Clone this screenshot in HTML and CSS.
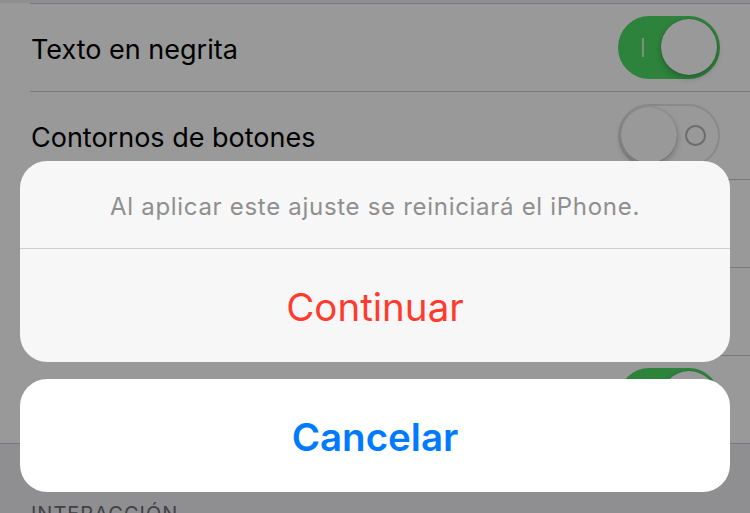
FILE: index.html
```html
<!DOCTYPE html>
<html lang="es">
<head>
  <meta charset="UTF-8">
  <meta name="viewport" content="width=device-width, initial-scale=1.0">
  <title>Accesibilidad</title>
  <link rel="stylesheet" href="styles.css">
</head>
<body>
  <div class="screen">
    <div class="settings">
      <div class="group">
        <div class="row">
          <span class="label">Texto en negrita</span>
          <span class="switch on"><span class="mark-on"></span><span class="knob"></span></span>
        </div>
        <div class="row">
          <span class="label">Contornos de botones</span>
          <span class="switch"><span class="knob"></span><span class="mark-off"></span></span>
        </div>
        <div class="row">
          <span class="label">Reducir transparencia</span>
          <span class="switch"><span class="knob"></span><span class="mark-off"></span></span>
        </div>
        <div class="row">
          <span class="label">Aumentar contraste</span>
          <span class="switch"><span class="knob"></span><span class="mark-off"></span></span>
        </div>
        <div class="row">
          <span class="label">Reducir movimiento</span>
          <span class="switch on"><span class="mark-on"></span><span class="knob"></span></span>
        </div>
      </div>
      <div class="section-header">INTERACCIÓN</div>
    </div>

    <div class="dim">
      <div class="sheet">
        <div class="sheet-group">
          <div class="sheet-message">Al aplicar este ajuste se reiniciará el iPhone.</div>
          <button class="sheet-button destructive">Continuar</button>
        </div>
        <div class="sheet-group">
          <button class="sheet-button cancel">Cancelar</button>
        </div>
      </div>
    </div>
  </div>
</body>
</html>
```

FILE: styles.css
```css
body {
  margin: 0;
  font-family: Inter, "Noto Sans", sans-serif;
  background-color: #efeff4;
}

.screen {
  position: relative;
  width: 750px;
  height: 513px;
  overflow: hidden;
}

.settings {
  padding-top: 3px;
}

.group {
  background-color: #fff;
  border-bottom: 1px solid #c8c7cc;
}

.row {
  height: 87px;
  margin-left: 30px;
  padding-right: 30px;
  border-top: 1px solid #c8c7cc;
  display: flex;
  align-items: center;
  justify-content: space-between;
}

.label {
  font-size: 27px;
  color: #000;
  padding-left: 1px;
  padding-top: 3px;
}

/* switches */
.switch {
  position: relative;
  width: 98px;
  height: 59px;
  border: 2px solid #e5e5ea;
  border-radius: 32px;
  background-color: #fff;
  box-sizing: content-box;
}

.switch.on {
  background-color: #4cd964;
  border-color: #4cd964;
}

.knob {
  position: absolute;
  top: 1px;
  left: 1px;
  width: 56px;
  height: 56px;
  border-radius: 50%;
  background-color: #fff;
  box-shadow: 0 3px 6px rgba(0, 0, 0, 0.25), 0 0 1px rgba(0, 0, 0, 0.3);
}

.switch.on .knob {
  left: auto;
  right: 1px;
}

.mark-on {
  position: absolute;
  left: 22px;
  top: 20px;
  width: 2px;
  height: 19px;
  background-color: #fff;
  opacity: 0.7;
}

.mark-off {
  position: absolute;
  right: 12px;
  top: 19px;
  width: 17px;
  height: 17px;
  border: 2px solid #b3b3b3;
  border-radius: 50%;
}

.section-header {
  padding: 58px 31px 0;
  font-size: 20px;
  color: #6d6d72;
  letter-spacing: 1px;
}

/* action sheet */
.dim {
  position: absolute;
  inset: 0;
  background-color: rgba(0, 0, 0, 0.4);
  display: flex;
  flex-direction: column;
  justify-content: flex-end;
}

.sheet {
  display: flex;
  flex-direction: column;
  gap: 17px;
  padding: 0 20px 21px;
}

.sheet-group {
  background-color: #f7f7f7;
  border-radius: 27px;
  overflow: hidden;
  display: flex;
  flex-direction: column;
}

.sheet-group:last-child {
  background-color: #fff;
}

.sheet-message {
  height: 88px;
  display: flex;
  align-items: center;
  justify-content: center;
  border-bottom: 1px solid #cfcfcf;
  font-size: 24px;
  letter-spacing: 0.7px;
  color: #8f8f8f;
  padding-top: 4px;
  box-sizing: border-box;
}

.sheet-button {
  height: 113px;
  border: none;
  background: none;
  font-family: inherit;
  font-size: 38.5px;
  padding: 2px 0 0;
  cursor: pointer;
}

.destructive {
  color: #ff3b30;
}

.cancel {
  color: #007aff;
  font-weight: 600;
}

.sheet-button:focus {
  outline: none;
}
```
